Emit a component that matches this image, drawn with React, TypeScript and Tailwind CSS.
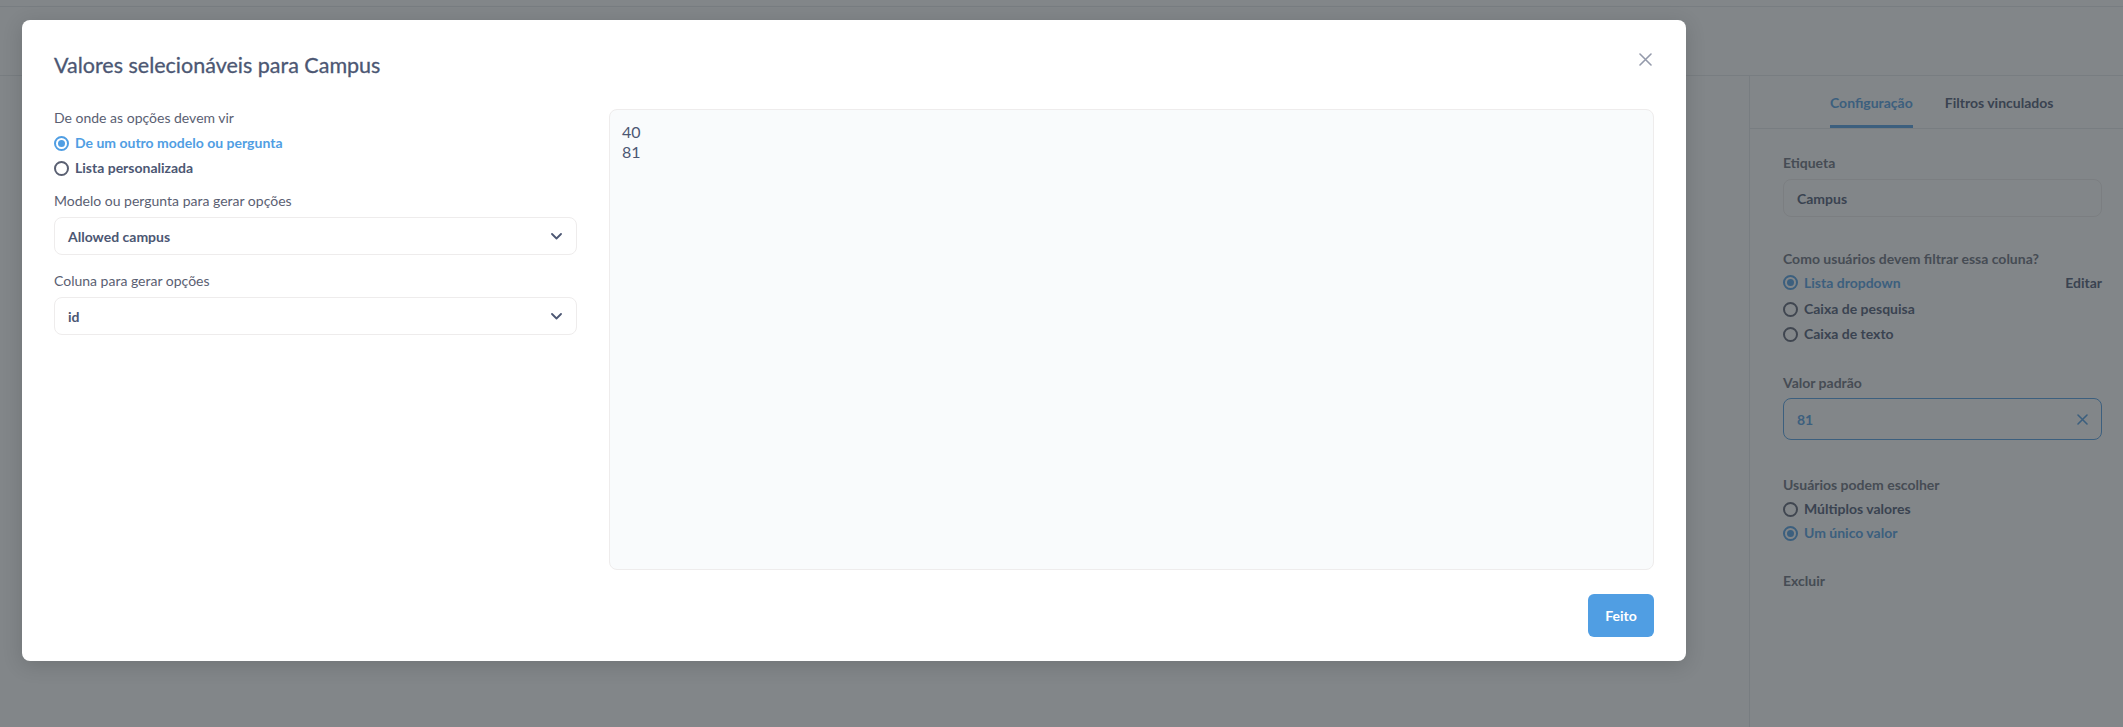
import React from "react";

function Radio({ label, checked }: { label: string; checked?: boolean }) {
  return (
    <div className="flex items-center h-[18px] gap-[6px]">
      <span
        className={
          checked
            ? "w-[15px] h-[15px] rounded-full border-2 border-[#509EE3] flex items-center justify-center"
            : "w-[15px] h-[15px] rounded-full border-2 border-[#5A6072]"
        }
      >
        {checked && <span className="w-[7px] h-[7px] rounded-full bg-[#509EE3]" />}
      </span>
      <span
        className={
          "text-[14px] leading-[18px] font-bold " + (checked ? "text-[#509EE3]" : "text-[#4C5773]")
        }
      >
        {label}
      </span>
    </div>
  );
}

function Chevron() {
  return (
    <svg width="11" height="7" viewBox="0 0 11 7" fill="none">
      <path d="M1 1l4.5 4.5L10 1" stroke="#4C5773" strokeWidth="1.8" strokeLinecap="round" strokeLinejoin="round" />
    </svg>
  );
}

function Select({ value }: { value: string }) {
  return (
    <div className="h-[38px] border border-[#EEECEC] rounded-[8px] bg-white flex items-center justify-between pl-[13px] pr-[14px]">
      <span className="text-[14px] font-bold text-[#4C5773]">{value}</span>
      <Chevron />
    </div>
  );
}

function Sidebar() {
  return (
    <aside className="w-[374px] border-l border-[#E6E8EB] flex flex-col">
      <div className="h-[53px] border-b border-[#E6E8EB] flex items-stretch pl-[80px] gap-[32px]">
        <div className="flex items-center border-b-[3px] border-[#509EE3] pt-[3px]">
          <span className="text-[14px] font-bold text-[#509EE3]">Configuração</span>
        </div>
        <div className="flex items-center">
          <span className="text-[14px] font-bold text-[#4C5773]">Filtros vinculados</span>
        </div>
      </div>
      <div className="pl-[33px] pr-[21px] pt-[25px] flex flex-col">
        <div className="text-[14px] leading-[18px] font-bold text-[#696E7B]">Etiqueta</div>
        <div className="mt-[7px] h-[38px] border border-[#EEECEC] rounded-[8px] flex items-center pl-[13px]">
          <span className="text-[14px] font-bold text-[#4C5773]">Campus</span>
        </div>
        <div className="mt-[33px] text-[14px] leading-[18px] font-bold text-[#696E7B]">
          Como usuários devem filtrar essa coluna?
        </div>
        <div className="mt-[4px] flex flex-col gap-[7px]">
          <div className="flex items-center justify-between">
            <Radio label="Lista dropdown" checked />
            <span className="text-[14px] font-bold text-[#4C5773]">Editar</span>
          </div>
          <Radio label="Caixa de pesquisa" />
          <Radio label="Caixa de texto" />
        </div>
        <div className="mt-[31px] text-[14px] leading-[18px] font-bold text-[#696E7B]">Valor padrão</div>
        <div className="mt-[6px] h-[42px] border border-[#509EE3] rounded-[8px] flex items-center justify-between pl-[13px] pr-[13px]">
          <span className="text-[14px] font-bold text-[#509EE3]">81</span>
          <svg width="11" height="11" viewBox="0 0 11 11" fill="none">
            <path d="M1 1l9 9M10 1l-9 9" stroke="#509EE3" strokeWidth="1.6" strokeLinecap="round" />
          </svg>
        </div>
        <div className="mt-[36px] text-[14px] leading-[18px] font-bold text-[#696E7B]">Usuários podem escolher</div>
        <div className="mt-[6px] flex flex-col gap-[6px]">
          <Radio label="Múltiplos valores" />
          <Radio label="Um único valor" checked />
        </div>
        <div className="mt-[30px] text-[14px] leading-[18px] font-bold text-[#696E7B]">Excluir</div>
      </div>
    </aside>
  );
}

export default function App() {
  return (
    <div className="relative w-full h-[727px] overflow-hidden bg-white font-['Lato','Noto_Sans',sans-serif]">
      {/* page behind the dialog */}
      <div className="h-[7px] border-b border-[#E6E8EB]" />
      <div className="h-[69px] border-b border-[#E6E8EB]" />
      <div className="flex h-[651px]">
        <div className="flex-1" />
        <Sidebar />
      </div>

      {/* backdrop */}
      <div className="absolute inset-0 bg-[rgba(46,53,59,0.6)]" />

      {/* dialog */}
      <div className="absolute left-[22px] top-[20px] w-[1664px] h-[641px] bg-white rounded-[8px] shadow-[0_4px_20px_rgba(0,0,0,0.15)] px-[32px] pt-[32px] pb-[24px] flex flex-col">
        <div className="flex items-center justify-between h-[26px] mb-[31px]">
          <h2 className="text-[21.5px] leading-[26px] font-normal text-[#4C5773] [-webkit-text-stroke:0.3px_#4C5773]">
            Valores selecionáveis para Campus
          </h2>
          <svg width="13" height="13" viewBox="0 0 13 13" fill="none" className="mr-[2px] -mt-[11px]">
            <path d="M1 1l11 11M12 1L1 12" stroke="#949AAB" strokeWidth="1.6" strokeLinecap="round" />
          </svg>
        </div>

        <div className="flex gap-[32px] h-[461px]">
          <div className="w-[523px] flex flex-col">
            <div className="text-[14px] leading-[18px] text-[#5A6072]">De onde as opções devem vir</div>
            <div className="mt-[7px] flex flex-col gap-[7px]">
              <Radio label="De um outro modelo ou pergunta" checked />
              <Radio label="Lista personalizada" />
            </div>
            <div className="mt-[15px] text-[14px] leading-[18px] text-[#5A6072]">Modelo ou pergunta para gerar opções</div>
            <div className="mt-[7px]">
              <Select value="Allowed campus" />
            </div>
            <div className="mt-[17px] text-[14px] leading-[18px] text-[#5A6072]">Coluna para gerar opções</div>
            <div className="mt-[7px]">
              <Select value="id" />
            </div>
          </div>
          <div className="flex-1 bg-[#F9FBFC] border border-[#EEECEC] rounded-[8px] pl-[12px] pt-[12px]">
            <div className="text-[16px] leading-[20px] text-[#4C5773]">40</div>
            <div className="text-[16px] leading-[20px] text-[#4C5773]">81</div>
          </div>
        </div>

        <div className="flex justify-end mt-[24px]">
          <button className="h-[43px] w-[66px] rounded-[6px] bg-[#509EE3] text-white text-[14px] font-bold">
            Feito
          </button>
        </div>
      </div>
    </div>
  );
}
